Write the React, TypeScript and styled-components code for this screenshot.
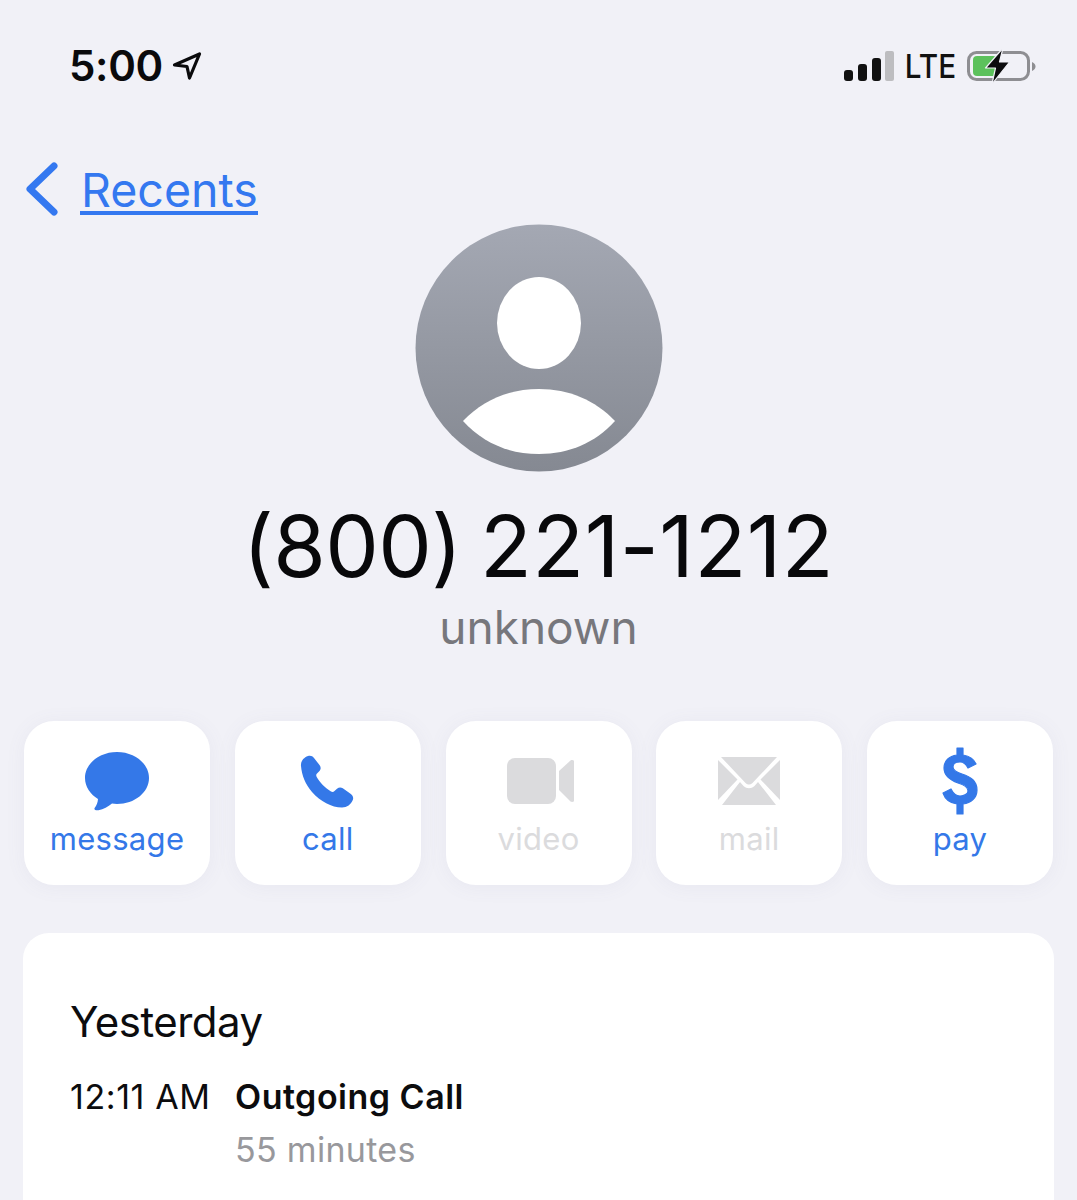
import React from "react";
import styled, { createGlobalStyle } from "styled-components";

const Global = createGlobalStyle`
  html, body { margin: 0; padding: 0; background: #f1f1f7; }
  body { width: 1077px; height: 1200px; overflow: hidden; font-family: Inter, "Liberation Sans", sans-serif; }
`;

const Page = styled.div`
  width: 1077px;
  height: 1200px;
  overflow: hidden;
  background: #f1f1f7;
  display: flex;
  flex-direction: column;
`;

const StatusBar = styled.div`
  height: 130px;
  padding: 40px 41px 0 69px;
  box-sizing: border-box;
  display: flex;
  justify-content: space-between;
  align-items: flex-start;
`;

const Group = styled.div<{ $gap: number }>`
  display: flex;
  align-items: center;
  gap: ${(p) => p.$gap}px;
`;

const Time = styled.span`
  font-size: 42px;
  line-height: 52px;
  font-weight: 600;
  color: #0a0a0c;
  letter-spacing: -0.3px;
`;

const Lte = styled.span`
  font-size: 33px;
  line-height: 52px;
  font-weight: 500;
  color: #111;
  transform: scaleX(0.9);
  transform-origin: center;
  margin: 0 -3px;
`;

const Nav = styled.div`
  height: 94px;
  padding-left: 25px;
  box-sizing: border-box;
  display: flex;
  align-items: flex-start;
  gap: 21px;
`;

const BackLink = styled.a`
  font-size: 46.5px;
  line-height: 56px;
  margin-top: 32px;
  color: #3478f0;
  text-decoration: none;
  border-bottom: 4px solid #3478f0;
  height: 49px;
  padding: 0 0 0 1px;
`;

const Chevron = styled.svg`
  margin-top: 31px;
`;

const Avatar = styled.svg`
  display: block;
  margin: 0 auto;
  flex: none;
`;

const PhoneNumber = styled.h1`
  margin: 27px 0 0;
  text-align: center;
  font-size: 85px;
  line-height: 96px;
  font-weight: 400;
  color: #08080a;
  letter-spacing: -0.6px;
  word-spacing: -5px;
`;

const LineDigits = styled.span`
  letter-spacing: 0.5px;
`;

const Subtitle = styled.div`
  text-align: center;
  font-size: 46px;
  line-height: 56px;
  margin-top: 4px;
  color: #77777c;
`;

const Actions = styled.div`
  margin-top: 66px;
  padding: 0 24px;
  display: grid;
  grid-template-columns: repeat(5, 186px);
  justify-content: space-between;
`;

const ActionCard = styled.div<{ $disabled?: boolean }>`
  height: 164px;
  background: #fff;
  border-radius: 30px;
  box-shadow: 0 2px 20px rgba(120, 120, 160, 0.07);
  display: flex;
  flex-direction: column;
  align-items: center;
  color: ${(p) => (p.$disabled ? "#dbdbdd" : "#3478e8")};
`;

const IconSlot = styled.div`
  height: 100px;
  width: 100%;
  display: flex;
  align-items: center;
  justify-content: center;
  padding-top: 20px;
  box-sizing: border-box;
`;

const ActionLabel = styled.span`
  font-size: 31px;
  line-height: 36px;
  letter-spacing: 0.3px;
`;

const HistoryCard = styled.section`
  margin: 48px 23px 0 23px;
  flex: 1;
  background: #fff;
  border-radius: 26px 26px 0 0;
  padding: 64px 47px 0;
  min-height: 267px;
  box-sizing: border-box;
`;

const DateHeading = styled.div`
  font-size: 42px;
  line-height: 50px;
  color: #0c0c0e;
  letter-spacing: -0.5px;
`;

const CallRow = styled.div`
  margin-top: 25px;
  display: grid;
  grid-template-columns: 165px auto;
  justify-content: start;
`;

const CallTime = styled.div`
  font-size: 34px;
  line-height: 50px;
  color: #0c0c0e;
  letter-spacing: 0.6px;
`;

const CallType = styled.div`
  font-size: 34px;
  line-height: 50px;
  font-weight: 600;
  color: #0c0c0e;
  letter-spacing: 0.5px;
`;

const Duration = styled.div`
  grid-column: 2;
  font-size: 34px;
  line-height: 50px;
  margin-top: 3px;
  color: #98989c;
  letter-spacing: 0.3px;
`;

export default function App() {
  return (
    <Page>
      <Global />
      <StatusBar>
        <Group $gap={9}>
          <Time>5:00</Time>
          <svg width="30" height="30" viewBox="0 0 30 30" fill="none">
            <path d="M2.5 14 L27.5 3 L17.5 27 L15 15.5 Z" stroke="#0a0a0c" strokeWidth="3.2" strokeLinejoin="round" />
          </svg>
        </Group>
        <Group $gap={10}>
          <svg width="54" height="30" viewBox="0 0 54 30">
            <rect x="3" y="19" width="9" height="11" rx="3" fill="#111" />
            <rect x="17" y="13" width="9" height="17" rx="3" fill="#111" />
            <rect x="31" y="7" width="9" height="23" rx="3" fill="#111" />
            <rect x="44" y="0" width="9" height="30" rx="2" fill="#bdbdc0" />
          </svg>
          <Lte>LTE</Lte>
          <svg width="70" height="36" viewBox="0 0 70 36">
            <rect x="2.5" y="4.5" width="60" height="27" rx="8" fill="none" stroke="#8e8e92" strokeWidth="3" />
            <rect x="7" y="8" width="24" height="20" rx="4" fill="#5cc15c" />
            <path d="M66 14 C68.5 15 69.5 17 69.5 18.5 C69.5 20 68.5 22 66 23 Z" fill="#8e8e92" />
            <path d="M37 0 L19.5 20 L29.5 20 L26 36 L43.5 14 L33.5 14 Z" fill="#0c0c0e" stroke="#f1f1f7" strokeWidth="1.2" strokeLinejoin="round" />
          </svg>
        </Group>
      </StatusBar>
      <Nav>
        <Chevron width="34" height="56" viewBox="0 0 34 56" fill="none">
          <path d="M29 5 L5 28 L29 51" stroke="#3478f0" strokeWidth="7" strokeLinecap="round" strokeLinejoin="round" />
        </Chevron>
        <BackLink>Recents</BackLink>
      </Nav>
      <Avatar width="248" height="248" viewBox="0 0 248 248">
        <defs>
          <linearGradient id="avatarFill" x1="0" y1="0" x2="0" y2="1">
            <stop offset="0" stopColor="#a4a8b3" />
            <stop offset="1" stopColor="#858992" />
          </linearGradient>
        </defs>
        <circle cx="124" cy="124" r="123.5" fill="url(#avatarFill)" />
        <ellipse cx="124" cy="99" rx="42" ry="46" fill="#fff" />
        <path d="M48 197 C68 176 94 165 124 165 C154 165 180 176 200 197 C180 219 154 230 124 230 C94 230 68 219 48 197 Z" fill="#fff" />
      </Avatar>
      <PhoneNumber>
        (800) <LineDigits>221-1212</LineDigits>
      </PhoneNumber>
      <Subtitle>unknown</Subtitle>
      <Actions>
        <ActionCard>
          <IconSlot>
            <svg width="66" height="60" viewBox="0 0 66 60">
              <path d="M33 1 C50.5 1 65 12.5 65 27 C65 41.5 50.5 53 33 53 C31 53 29.5 52.9 28 52.6 C24 55.5 19.5 58.5 14.5 59.3 C11 59.7 9.5 58 11 56.5 C12.5 54.5 13.8 51.5 14 48 C6.3 43.2 1 35.6 1 27 C1 12.5 15.5 1 33 1 Z" fill="currentColor" />
            </svg>
          </IconSlot>
          <ActionLabel>message</ActionLabel>
        </ActionCard>
        <ActionCard>
          <IconSlot>
            <svg width="56" height="53" viewBox="0 0 56 53">
              <path d="M1 11 C0.5 6.5 3.5 2.5 8 1 C10.5 0.2 12.5 1 14 3 L19.5 10 C21.2 12.2 21 14.5 19 16.5 L17 18.5 C16 19.5 16 20.8 16.7 22 C19.7 27.5 25.2 33 31 36.5 C32.3 37.2 33.5 37 34.5 36 L37 33.8 C38.8 32.2 40.8 32 42.8 33.3 L50.5 38.8 C52.8 40.5 53.8 42.8 52.8 45 C51 49.5 47 52.5 42 52.5 C31.5 52.5 20.5 46.5 12 37 C5.5 29.5 1.8 20.5 1 11 Z" fill="currentColor" />
            </svg>
          </IconSlot>
          <ActionLabel>call</ActionLabel>
        </ActionCard>
        <ActionCard $disabled>
          <IconSlot>
            <svg width="70" height="46" viewBox="-2 0 70 46">
              <rect x="1" y="0" width="49" height="46" rx="8" fill="currentColor" />
              <path d="M53 13 L64.5 2.5 C66.5 1.5 69 2.5 69 5 L69 41 C69 43.5 66.5 44.5 64.5 43.5 L53 32 Z" fill="currentColor" />
            </svg>
          </IconSlot>
          <ActionLabel>video</ActionLabel>
        </ActionCard>
        <ActionCard $disabled>
          <IconSlot>
            <svg width="64" height="50" viewBox="0 0 64 50">
              <path d="M4 1 L60 1 L35.5 27 C33 29 31 29 28.5 27 Z" fill="currentColor" />
              <path d="M1 4 L1 44 L20.5 23.5 Z" fill="currentColor" />
              <path d="M63 4 L63 44 L43.5 23.5 Z" fill="currentColor" />
              <path d="M5 49 L23 26 L26.5 30 C30 33 34 33 37.5 30 L41 26 L59 49 Z" fill="currentColor" />
            </svg>
          </IconSlot>
          <ActionLabel>mail</ActionLabel>
        </ActionCard>
        <ActionCard>
          <IconSlot>
            <svg width="36" height="68" viewBox="0 0 36 68">
              <path d="M15 1 H21 V8 C27 9 32 12 34 17 L26 21 C24 17 21 15 18 15 C14 15 11 17 11 20 C11 23 14 25 20 27 C29 30 35 34 35 43 C35 51 29 56 21 57 V67 H15 V57 C8 56 3 52 1 46 L9 42 C11 46 14 49 18 49 C22 49 26 47 26 44 C26 40 23 38 16 36 C8 33 2 29 2 21 C2 14 7 9 15 8 Z" fill="currentColor" stroke="currentColor" strokeWidth="1.2" strokeLinejoin="round" />
            </svg>
          </IconSlot>
          <ActionLabel>pay</ActionLabel>
        </ActionCard>
      </Actions>
      <HistoryCard>
        <DateHeading>Yesterday</DateHeading>
        <CallRow>
          <CallTime>12:11 AM</CallTime>
          <CallType>Outgoing Call</CallType>
          <Duration>55 minutes</Duration>
        </CallRow>
      </HistoryCard>
    </Page>
  );
}
